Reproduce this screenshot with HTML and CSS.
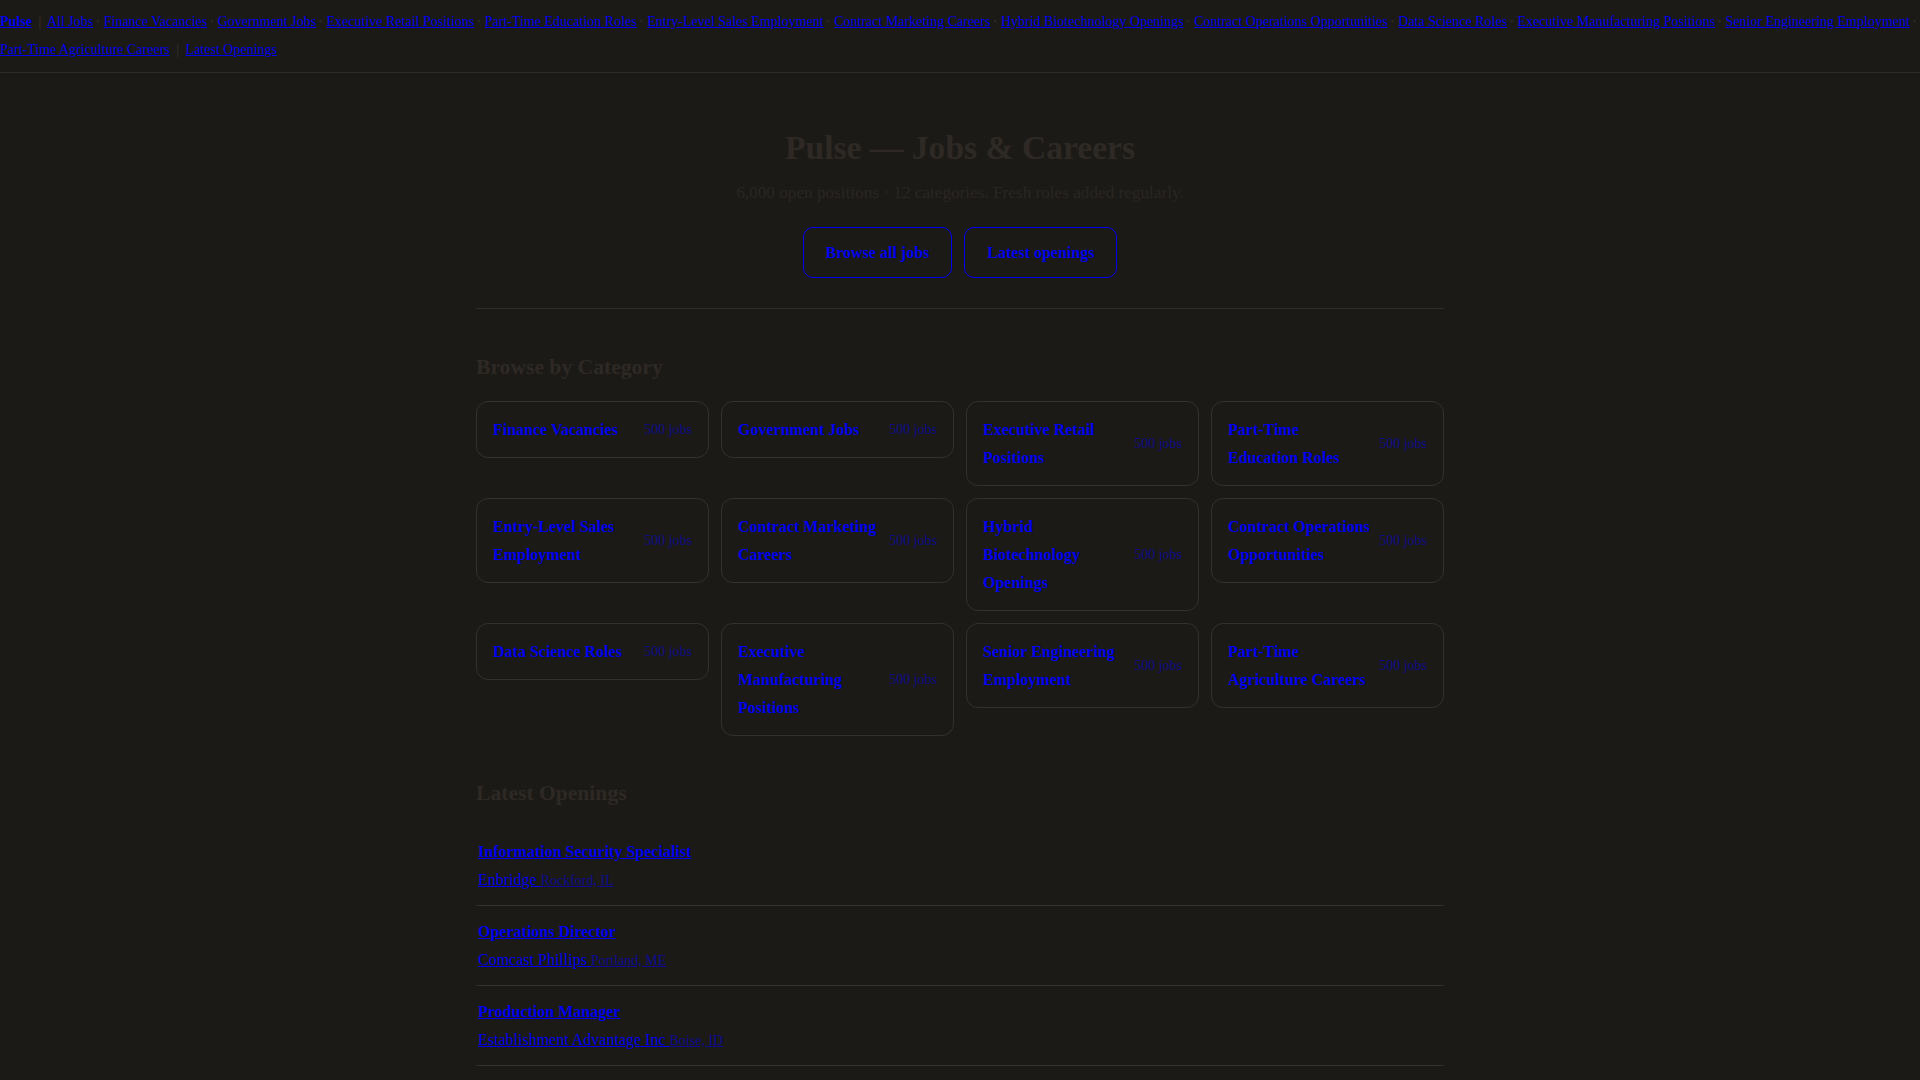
FILE: index.html
```html
<!DOCTYPE html>
<html lang="en">
<head>
<meta charset="utf-8">
<title>Pulse — Jobs &amp; Careers</title>
<link rel="stylesheet" href="styles.css">
</head>
<body>
<nav class="topnav"><a class="brand" href="#">Pulse</a> <span class="bar">|</span> <a href="#">All Jobs</a><span class="dot">·</span> <a href="#">Finance Vacancies</a><span class="dot">·</span> <a href="#">Government Jobs</a><span class="dot">·</span> <a href="#">Executive Retail Positions</a><span class="dot">·</span> <a href="#">Part-Time Education Roles</a><span class="dot">·</span> <a href="#">Entry-Level Sales Employment</a><span class="dot">·</span> <a href="#">Contract Marketing Careers</a><span class="dot">·</span> <a href="#">Hybrid Biotechnology Openings</a><span class="dot">·</span> <a href="#">Contract Operations Opportunities</a><span class="dot">·</span> <a href="#">Data Science Roles</a><span class="dot">·</span> <a href="#">Executive Manufacturing Positions</a><span class="dot">·</span> <a href="#">Senior Engineering Employment</a><span class="dot">·</span> <a href="#">Part-Time Agriculture Careers</a> <span class="bar">|</span> <a href="#">Latest Openings</a></nav>

<main class="wrap">
  <header class="hero">
    <h1>Pulse — Jobs &amp; Careers</h1>
    <p class="sub">6,000 open positions · 12 categories. Fresh roles added regularly.</p>
    <div class="actions">
      <a class="btn" href="#">Browse all jobs</a>
      <a class="btn" href="#">Latest openings</a>
    </div>
  </header>

  <section class="section">
    <h2>Browse by Category</h2>
    <div class="grid">
      <a class="card" href="#"><span class="card-title">Finance Vacancies</span><span class="card-count">500 jobs</span></a>
      <a class="card" href="#"><span class="card-title">Government Jobs</span><span class="card-count">500 jobs</span></a>
      <a class="card" href="#"><span class="card-title">Executive Retail Positions</span><span class="card-count">500 jobs</span></a>
      <a class="card" href="#"><span class="card-title">Part-Time Education Roles</span><span class="card-count">500 jobs</span></a>
      <a class="card" href="#"><span class="card-title">Entry-Level Sales Employment</span><span class="card-count">500 jobs</span></a>
      <a class="card" href="#"><span class="card-title">Contract Marketing Careers</span><span class="card-count">500 jobs</span></a>
      <a class="card" href="#"><span class="card-title">Hybrid Biotechnology Openings</span><span class="card-count">500 jobs</span></a>
      <a class="card" href="#"><span class="card-title">Contract Operations Opportunities</span><span class="card-count">500 jobs</span></a>
      <a class="card" href="#"><span class="card-title">Data Science Roles</span><span class="card-count">500 jobs</span></a>
      <a class="card" href="#"><span class="card-title">Executive Manufacturing Positions</span><span class="card-count">500 jobs</span></a>
      <a class="card" href="#"><span class="card-title">Senior Engineering Employment</span><span class="card-count">500 jobs</span></a>
      <a class="card" href="#"><span class="card-title">Part-Time Agriculture Careers</span><span class="card-count">500 jobs</span></a>
    </div>
  </section>

  <section class="section section-jobs">
    <h2>Latest Openings</h2>
    <div class="jobs">
      <a class="job" href="#"><span class="job-title">Information Security Specialist</span><span class="job-meta">Enbridge <span class="job-loc">Rockford, IL</span></span></a>
      <a class="job" href="#"><span class="job-title">Operations Director</span><span class="job-meta">Comcast Phillips <span class="job-loc">Portland, ME</span></span></a>
      <a class="job" href="#"><span class="job-title">Production Manager</span><span class="job-meta">Establishment Advantage Inc <span class="job-loc">Boise, ID</span></span></a>
    </div>
  </section>
</main>
</body>
</html>
```

FILE: styles.css
```css
html, body {
  margin: 0;
  padding: 0;
  background: #1c1a17;
}

body {
  font-family: "Liberation Serif", "Times New Roman", serif;
  color: #2e2924;
  font-size: 16px;
}

.topnav {
  padding: 8px 0;
  border-bottom: 1px solid #302d28;
  font-size: 14px;
  line-height: 28px;
}

.topnav a {
  color: #0000ee;
  white-space: nowrap;
}

.topnav .brand {
  font-weight: bold;
}

.bar {
  color: #38342f;
  margin: 0 3px;
}

.dot {
  color: #38342f;
  margin-left: 2.3px;
}

.wrap {
  max-width: 968px;
  margin: 0 auto;
  padding: 0 16px;
}

.hero {
  text-align: center;
  padding: 55px 0 30px;
  border-bottom: 1px solid #302d28;
}

.hero h1 {
  margin: 0;
  font-size: 33.6px;
  line-height: 1.2;
  font-weight: bold;
  color: #2e2924;
}

.sub {
  margin: 9.5px 0 0;
  font-size: 17.2px;
  line-height: 1.7;
  color: #2a2622;
}

.actions {
  display: flex;
  justify-content: center;
  gap: 12px;
  margin-top: 20px;
}

.btn {
  display: inline-block;
  border: 1px solid #0000ee;
  border-radius: 10px;
  padding: 11px 22px;
  font-size: 16px;
  line-height: 1.7;
  font-weight: bold;
  color: #0000ee;
  text-decoration: none;
}

.section h2 {
  margin: 45.5px 0 20.5px;
  font-size: 21.6px;
  line-height: 1.2;
  font-weight: bold;
  color: #2e2924;
}

.section-jobs h2 {
  margin: 44.5px 0 19.8px;
}

.grid {
  display: grid;
  grid-template-columns: repeat(4, 1fr);
  gap: 12px;
  align-items: start;
}

.card {
  display: flex;
  align-items: center;
  justify-content: space-between;
  gap: 8px;
  padding: 13.5px 16px;
  border: 1px solid #34302b;
  border-radius: 12px;
  line-height: 28px;
  text-decoration: none;
}

.card-title {
  font-weight: bold;
  font-size: 16px;
  color: #0000ee;
}

.card-count {
  flex-shrink: 0;
  white-space: nowrap;
  font-size: 14px;
  color: #0000ee;
  opacity: 0.5;
}

.jobs {
  display: flex;
  flex-direction: column;
}

.job {
  display: block;
  padding: 12px 2px;
  border-bottom: 1px solid #34302b;
  line-height: 1.72;
  color: #0000ee;
}

.job-title {
  display: block;
  font-weight: bold;
  font-size: 16px;
}

.job-meta {
  display: block;
  font-size: 16px;
}

.job-loc {
  font-size: 14px;
  opacity: 0.55;
}
```
